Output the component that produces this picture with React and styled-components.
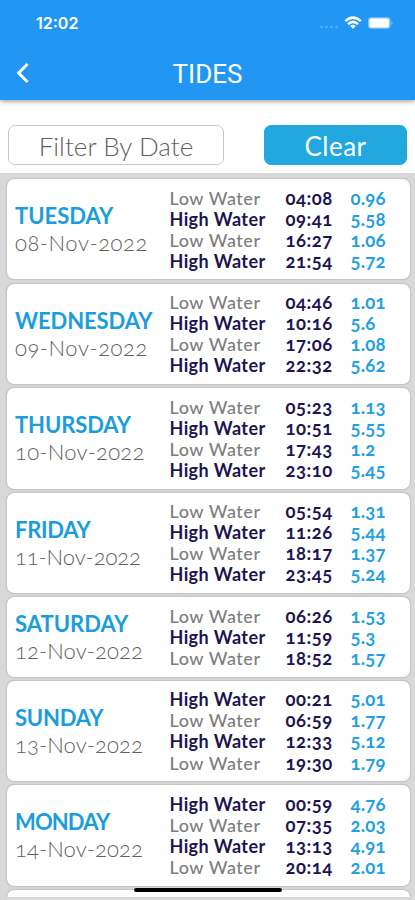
import styled, { createGlobalStyle, css } from "styled-components";

const GlobalStyle = createGlobalStyle`
  * {
    box-sizing: border-box;
  }

  body {
    margin: 0;
    background-color: #ffffff;
  }
`;

const Screen = styled.div`
  position: relative;
  display: flex;
  flex-direction: column;
  width: 415px;
  height: 900px;
  overflow: hidden;
  background-color: #d9d9d9;
  font-family: Lato, "Open Sans", sans-serif;
  font-variant-numeric: oldstyle-nums;
  white-space: nowrap;
`;

// Header
const Header = styled.header`
  position: relative;
  z-index: 1;
  flex: none;
  height: 100px;
  color: #ffffff;
  background-color: #2196f3;
  box-shadow: 0 1px 5px rgba(0, 0, 0, 0.45);
`;

const StatusBar = styled.div`
  display: flex;
  align-items: center;
  justify-content: space-between;
  height: 46px;
  padding: 0 21px 0 36px;
`;

const Clock = styled.span`
  font-family: Inter, sans-serif;
  font-size: 16px;
  font-weight: 600;
  font-variant-numeric: normal;
`;

const StatusIcons = styled.svg`
  display: block;
  width: 76px;
  height: 16px;
`;

const NavBar = styled.div`
  display: grid;
  grid-template-columns: 45px 1fr 45px;
  align-items: center;
  height: 54px;
`;

const BackIcon = styled.svg`
  display: block;
  width: 14px;
  height: 22px;
  margin-left: 16px;
`;

const Title = styled.h1`
  margin: 0;
  padding-top: 1px;
  font-family: Roboto, sans-serif;
  font-size: 26px;
  font-weight: 400;
  text-align: center;
`;

// Filter
const FilterBar = styled.div`
  display: flex;
  flex: none;
  align-items: flex-start;
  justify-content: space-between;
  height: 73px;
  padding: 25px 8px 0;
  background-color: #ffffff;
`;

const FilterButton = styled.button`
  width: ${(props) => (props.$primary ? "143px" : "216px")};
  height: 40px;
  padding: 2px 0 0;
  border: 1px solid #c8c8c8;
  border-radius: 7px;
  background-color: #ffffff;
  color: #5f5f5f;
  font-family: inherit;
  font-size: 26px;
  font-weight: 300;
  letter-spacing: 0.05px;

  ${(props) =>
    props.$primary &&
    css`
      border-color: #22a7df;
      background-color: #22a7df;
      color: #ffffff;
      font-weight: 400;
      letter-spacing: 0.5px;
    `}
`;

// Tide list
const List = styled.main`
  display: flex;
  flex: none;
  flex-direction: column;
  gap: 4.2px;
  height: 724px;
  padding: 6px 5.5px 0 6.5px;
  overflow: hidden;
`;

const Card = styled.section`
  display: grid;
  flex: none;
  grid-template-columns: 154.5px 1fr;
  align-items: center;
  min-height: 30px;
  padding: 8.5px 8px 7.5px 8.5px;
  border-radius: 7px;
  background-color: #ffffff;
  box-shadow: 0 0 2px rgba(0, 0, 0, 0.35);
`;

const DayName = styled.div`
  color: #1b9ddb;
  font-size: 22px;
  font-weight: 700;
  line-height: 26px;
  letter-spacing: ${(props) => props.$tracking}px;
`;

const DateText = styled.div`
  color: #606060;
  font-size: 22px;
  font-weight: 300;
  line-height: 27px;
  letter-spacing: ${(props) => props.$tracking}px;
`;

const TideRow = styled.div`
  display: grid;
  grid-template-columns: 116px 65px 1fr;
  height: 21.1px;
  color: #1d1552;
  font-size: 18.5px;
  font-weight: 700;
  line-height: 21px;
`;

const Label = styled.span`
  color: ${(props) => (props.$high ? "#1d1552" : "#7d7d7d")};
  font-size: 18px;
  font-weight: ${(props) => (props.$high ? 700 : 500)};
  letter-spacing: ${(props) => (props.$high ? "0.4px" : "0.55px")};
`;

const Time = styled.span`
  letter-spacing: 0.5px;
`;

const Level = styled.span`
  color: #22a0df;
  letter-spacing: 0.2px;
`;

const HomeIndicator = styled.div`
  position: absolute;
  bottom: 8px;
  left: 134px;
  width: 148px;
  height: 4.5px;
  border-radius: 3px;
  background-color: #000000;
`;

const days = [
  {
    name: "TUESDAY",
    date: "08-Nov-2022",
    tracking: 0,
    dateTracking: 0.55,
    tides: [
      ["Low", "04:08", "0.96"],
      ["High", "09:41", "5.58"],
      ["Low", "16:27", "1.06"],
      ["High", "21:54", "5.72"],
    ],
  },
  {
    name: "WEDNESDAY",
    date: "09-Nov-2022",
    tracking: -0.1,
    dateTracking: 0.55,
    tides: [
      ["Low", "04:46", "1.01"],
      ["High", "10:16", "5.6"],
      ["Low", "17:06", "1.08"],
      ["High", "22:32", "5.62"],
    ],
  },
  {
    name: "THURSDAY",
    date: "10-Nov-2022",
    tracking: -0.1,
    dateTracking: 0.25,
    tides: [
      ["Low", "05:23", "1.13"],
      ["High", "10:51", "5.55"],
      ["Low", "17:43", "1.2"],
      ["High", "23:10", "5.45"],
    ],
  },
  {
    name: "FRIDAY",
    date: "11-Nov-2022",
    tracking: -0.3,
    dateTracking: -0.1,
    tides: [
      ["Low", "05:54", "1.31"],
      ["High", "11:26", "5.44"],
      ["Low", "18:17", "1.37"],
      ["High", "23:45", "5.24"],
    ],
  },
  {
    name: "SATURDAY",
    date: "12-Nov-2022",
    tracking: 0,
    dateTracking: 0.1,
    tides: [
      ["Low", "06:26", "1.53"],
      ["High", "11:59", "5.3"],
      ["Low", "18:52", "1.57"],
    ],
  },
  {
    name: "SUNDAY",
    date: "13-Nov-2022",
    tracking: -0.2,
    dateTracking: 0.1,
    tides: [
      ["High", "00:21", "5.01"],
      ["Low", "06:59", "1.77"],
      ["High", "12:33", "5.12"],
      ["Low", "19:30", "1.79"],
    ],
  },
  {
    name: "MONDAY",
    date: "14-Nov-2022",
    tracking: -0.9,
    dateTracking: 0.1,
    tides: [
      ["High", "00:59", "4.76"],
      ["Low", "07:35", "2.03"],
      ["High", "13:13", "4.91"],
      ["Low", "20:14", "2.01"],
    ],
  },
];

function DayCard({ day }) {
  return (
    <Card>
      <div>
        <DayName $tracking={day.tracking}>{day.name}</DayName>
        <DateText $tracking={day.dateTracking}>{day.date}</DateText>
      </div>
      <div>
        {day.tides.map(([type, time, level]) => (
          <TideRow key={time}>
            <Label $high={type === "High"}>{type} Water</Label>
            <Time>{time}</Time>
            <Level>{level}</Level>
          </TideRow>
        ))}
      </div>
    </Card>
  );
}

function App() {
  return (
    <>
      <GlobalStyle />
      <Screen>
        <Header>
          <StatusBar>
            <Clock>12:02</Clock>
            <StatusIcons viewBox="0 0 76 16" fill="#ffffff">
              {/* no signal */}
              <g opacity="0.25">
                <circle cx="3.5" cy="12" r="1.3" />
                <circle cx="8.5" cy="12" r="1.3" />
                <circle cx="13.5" cy="12" r="1.3" />
                <circle cx="18.5" cy="12" r="1.3" />
              </g>
              {/* wifi */}
              <g fill="none" stroke="#ffffff" strokeWidth="2.5">
                <path d="M27.3 6.2 Q35 -1 42.7 6.2" />
                <path d="M30 9.2 Q35 4.5 40 9.2" />
              </g>
              <path d="M32.2 10.9 Q35 8.7 37.8 10.9 L35 13.8 Z" />
              {/* battery */}
              <rect x="50" y="2.2" width="22.5" height="11.6" rx="3" opacity="0.45" />
              <rect x="51.5" y="3.6" width="19.5" height="8.8" rx="1.6" />
              <path d="M73.5 6 Q75.5 8 73.5 10 Z" opacity="0.6" />
            </StatusIcons>
          </StatusBar>
          <NavBar>
            <BackIcon viewBox="0 0 14 22" fill="none" stroke="#ffffff" strokeWidth="3">
              <path d="M11.5 2 L2.6 11 L11.5 20" />
            </BackIcon>
            <Title>TIDES</Title>
          </NavBar>
        </Header>
        <FilterBar>
          <FilterButton>Filter By Date</FilterButton>
          <FilterButton $primary>Clear</FilterButton>
        </FilterBar>
        <List>
          {days.map((day) => (
            <DayCard key={day.date} day={day} />
          ))}
          <Card />
        </List>
        <HomeIndicator />
      </Screen>
    </>
  );
}

export default App;
